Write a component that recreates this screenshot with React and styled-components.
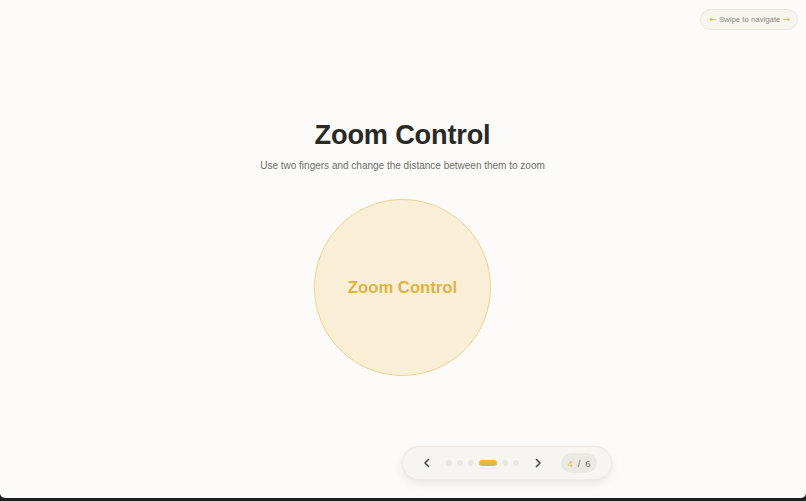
import React from "react";
import styled, { createGlobalStyle } from "styled-components";

const Global = createGlobalStyle`
  html, body { margin: 0; padding: 0; background: #1e1e1e; }
  body { font-family: "Liberation Sans", Arial, sans-serif; }
  * { box-sizing: border-box; }
`;

const Screen = styled.div`
  position: relative;
  width: 806px;
  height: 498px;
  background: #fcfbf9;
  border-radius: 0 0 5px 5px;
  overflow: hidden;
  display: flex;
  align-items: center;
  justify-content: center;
`;

const Hint = styled.div`
  position: absolute;
  top: 9px;
  right: 8px;
  height: 21px;
  padding: 0 7px 0 8px;
  display: flex;
  align-items: center;
  gap: 2px;
  border: 1px solid #ebe7dd;
  background: #f7f5f0;
  border-radius: 999px;
  font-size: 7.8px;
  color: #8b8980;
`;

const Arrow = styled.span`
  color: #e0b235;
  font-size: 9px;
  font-family: "DejaVu Sans", sans-serif;
  line-height: 1;
`;

const Content = styled.div`
  display: flex;
  flex-direction: column;
  align-items: center;
  margin-top: -3px;
  margin-left: -1px;
`;

const Title = styled.h1`
  margin: 0;
  font-size: 27.2px;
  line-height: 32px;
  font-weight: 700;
  color: #2a2926;
  letter-spacing: -0.2px;
`;

const Subtitle = styled.p`
  margin: 5px 0 0;
  font-size: 10px;
  line-height: 20px;
  color: #6f6d68;
`;

const Circle = styled.div`
  margin-top: 23px;
  width: 177px;
  height: 177px;
  border-radius: 50%;
  background: #f9efd6;
  border: 1.5px solid #efd48e;
  display: flex;
  align-items: center;
  justify-content: center;
  font-size: 16.7px;
  font-weight: 700;
  color: #e0b33e;
`;

const Nav = styled.div`
  position: absolute;
  left: 402px;
  bottom: 18px;
  height: 34px;
  padding: 0 14px 0 12px;
  display: flex;
  align-items: center;
  background: #f6f5f2;
  border: 1px solid #ecebe6;
  border-radius: 999px;
  box-shadow: 0 4px 10px rgba(0, 0, 0, 0.08);
`;

const NavButton = styled.button`
  width: 24px;
  height: 24px;
  padding: 0;
  border: none;
  background: transparent;
  display: flex;
  align-items: center;
  justify-content: center;
  color: #45433f;
`;

const Dots = styled.div`
  display: flex;
  align-items: center;
  gap: 5px;
  margin: 0 7px;
`;

const Dot = styled.span`
  width: ${(p) => (p.$active ? "18px" : "6px")};
  height: 6px;
  border-radius: 999px;
  background: ${(p) => (p.$active ? "#e5b93c" : "#e8e6e1")};
`;

const Counter = styled.div`
  margin-left: 11px;
  width: 36px;
  height: 20px;
  border-radius: 999px;
  background: #ebe9e4;
  display: flex;
  align-items: center;
  justify-content: center;
  gap: 5px;
  font-size: 9.5px;
  color: #6f6d68;
`;

const Current = styled.span`
  color: #e5c254;
`;

const Chevron = ({ dir }) => (
  <svg width="10" height="10" viewBox="0 0 10 10" fill="none">
    <path
      d={dir === "left" ? "M6.5 1.5 L3 5 L6.5 8.5" : "M3.5 1.5 L7 5 L3.5 8.5"}
      stroke="currentColor"
      strokeWidth="1.5"
      strokeLinecap="round"
      strokeLinejoin="round"
    />
  </svg>
);

export default function App() {
  const total = 6;
  const current = 4;
  return (
    <>
      <Global />
      <Screen>
        <Hint>
          <Arrow>←</Arrow>
          <span>Swipe to navigate</span>
          <Arrow>→</Arrow>
        </Hint>
        <Content>
          <Title>Zoom Control</Title>
          <Subtitle>Use two fingers and change the distance between them to zoom</Subtitle>
          <Circle>Zoom Control</Circle>
        </Content>
        <Nav>
          <NavButton aria-label="Previous">
            <Chevron dir="left" />
          </NavButton>
          <Dots>
            {Array.from({ length: total }).map((_, i) => (
              <Dot key={i} $active={i + 1 === current} />
            ))}
          </Dots>
          <NavButton aria-label="Next">
            <Chevron dir="right" />
          </NavButton>
          <Counter>
            <Current>{current}</Current>
            <span>/</span>
            <span>{total}</span>
          </Counter>
        </Nav>
      </Screen>
    </>
  );
}
